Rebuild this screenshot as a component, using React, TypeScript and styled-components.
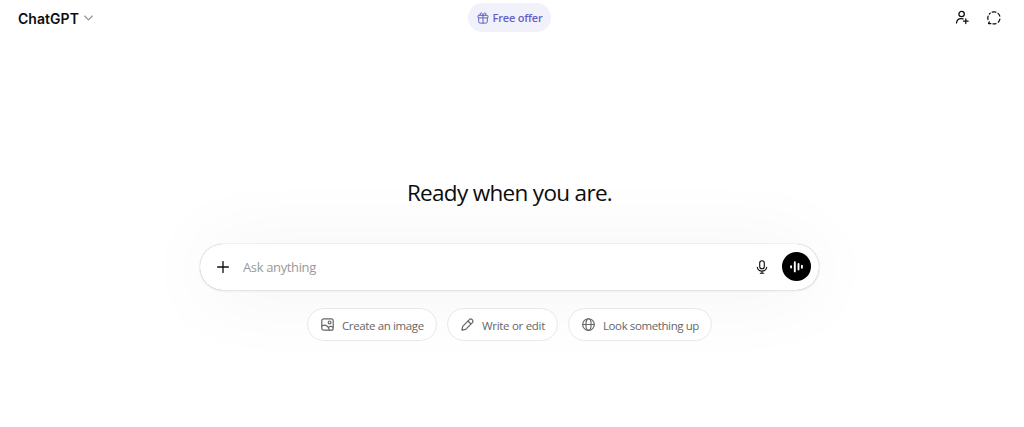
import type { ReactNode } from "react";
import styled, { createGlobalStyle } from "styled-components";

type ChipProps = {
  icon: ReactNode;
  label: string;
  width: number;
  spacing: number;
};

export default function App() {
  return (
    <Page>
      <GlobalStyle />
      <Header>
        <ModelButton>
          ChatGPT
          <ChevronIcon />
        </ModelButton>
        <OfferButton>
          <GiftIcon />
          <OfferText>Free offer</OfferText>
        </OfferButton>
        <HeaderActions>
          <IconButton aria-label="Invite">
            <InviteIcon />
          </IconButton>
          <IconButton aria-label="Temporary chat">
            <TemporaryIcon />
          </IconButton>
        </HeaderActions>
      </Header>
      <Main>
        <Title>Ready when you are.</Title>
        <Composer>
          <IconButton aria-label="Add">
            <PlusIcon />
          </IconButton>
          <Placeholder>Ask anything</Placeholder>
          <IconButton aria-label="Dictate">
            <MicIcon />
          </IconButton>
          <VoiceButton aria-label="Voice mode">
            <VoiceIcon />
          </VoiceButton>
        </Composer>
        <Chips>
          <Chip icon={<ImageIcon />} label="Create an image" width={130} spacing={-0.38} />
          <Chip icon={<PencilIcon />} label="Write or edit" width={111} spacing={-0.3} />
          <Chip icon={<GlobeIcon />} label="Look something up" width={144} spacing={-0.4} />
        </Chips>
      </Main>
    </Page>
  );
}

const Chip = ({ icon, label, width, spacing }: ChipProps) => (
  <ChipButton $width={width}>
    {icon}
    <ChipText $spacing={spacing}>{label}</ChipText>
  </ChipButton>
);

const ChevronIcon = () => (
  <Icon width="9" height="6" viewBox="0 0 9 6" stroke="#929292" strokeWidth="1.15">
    <path d="M.7 1 4.5 4.8 8.3 1" />
  </Icon>
);

const GiftIcon = () => (
  <Icon width="12" height="12" viewBox="0 0 12 12" strokeWidth="1">
    <rect x="1" y="3.3" width="10" height="2.6" rx=".7" />
    <path d="M1.7 5.9v3.8c0 .9.5 1.4 1.4 1.4h5.800c.9 0 1.400-.5 1.400-1.400V5.900M6 3.300v7.800M6 3.200C5.500 1.600 4.900 1 4.100 1c-1.300 0-1.600 1.700-.5 2.200M6 3.200C6.500 1.600 7.100 1 7.900 1c1.300 0 1.600 1.700.5 2.200" />
  </Icon>
);

const InviteIcon = () => (
  <Icon width="14" height="15" viewBox="0 0 14 15" strokeWidth="1.25">
    <circle cx="6.6" cy="4" r="2.7" />
    <path d="M1.5 13c.3-2.9 2.1-4.5 4.600-4.500.8 0 1.400.1 2 .4M10.800 8.900v4.600M8.500 11.200h4.600" />
  </Icon>
);

const TemporaryIcon = () => (
  <Icon width="14" height="14" viewBox="0 0 14 14" strokeWidth="1.25">
    <path d="M5.2 1.1A6.1 6.1 0 0 1 8.9 1.1M11 2.4A6.1 6.1 0 0 1 12.8 5.1M12.9 8.2A6.1 6.1 0 0 1 11.3 11.2M9 12.7A6.1 6.1 0 0 1 5.9 12.8M3.900 12.500H1.500L2.300 10.900M1 8.500A6.100 6.100 0 0 1 1.100 5.200M2.400 3A6.100 6.100 0 0 1 3.200 2.200" />
  </Icon>
);

const PlusIcon = () => (
  <Icon width="12" height="12" viewBox="0 0 12 12" strokeWidth="1.3">
    <path d="M6 .6v10.8M.6 6h10.8" />
  </Icon>
);

const MicIcon = () => (
  <Icon width="12" height="14" viewBox="0 0 12 14" strokeWidth="1.1">
    <rect x="3.7" y=".7" width="4.6" height="8" rx="2.3" />
    <path d="M1.3 7.3C1.800 9.700 3.600 11 6 11s4.200-1.300 4.700-3.700M6 11v2.200M4.300 13.300h3.400" />
  </Icon>
);

const VoiceIcon = () => (
  <Icon width="14" height="12" viewBox="0 0 14 12" strokeWidth="1.9">
    <path d="M1.1 5.1v1.4M4.800 1.200v9.200M8.500 3v5.600M11.900 4.800v2" />
  </Icon>
);

const ImageIcon = () => (
  <Icon width="13" height="13" viewBox="0 0 13 13" strokeWidth="1.2">
    <rect x=".8" y=".8" width="11.4" height="11.4" rx="2" />
    <circle cx="8.6" cy="4.4" r="1.4" />
    <path d="M1 8C4 5.900 7.600 7.800 8.300 12M7.500 9.200c1.400-1.200 2.800-1.200 4.300-.2" />
  </Icon>
);

const PencilIcon = () => (
  <Icon width="13" height="13" viewBox="0 0 13 13" strokeWidth="1.2">
    <path d="M.9 12.100l.8-3.800L8.100 1.800c2-2.100 5.100.8 3.100 3L4.700 11.300zM6.900 3l3.100 3" />
  </Icon>
);

const GlobeIcon = () => (
  <Icon width="13" height="13" viewBox="0 0 13 13" strokeWidth="1.15">
    <circle cx="6.5" cy="6.5" r="5.8" />
    <ellipse cx="6.5" cy="6.5" rx="2.6" ry="5.8" />
    <path d="M.7 6.5h11.6" />
  </Icon>
);

const GlobalStyle = createGlobalStyle`
  * {
    box-sizing: border-box;
  }

  body {
    margin: 0;
    background: #fff;
    color: #0d0d0d;
    font-family: "Open Sans", "Noto Sans", sans-serif;
  }

  button {
    border: 0;
    padding: 0;
    background: none;
    color: inherit;
    font: inherit;
  }
`;

const Icon = styled.svg`
  display: block;
  flex: none;
  fill: none;
  stroke: ${({ stroke }) => stroke ?? "currentColor"};
  stroke-linecap: round;
  stroke-linejoin: round;
`;

const Page = styled.div`
  height: 427px;
  padding-right: 5px;
  overflow: hidden;
`;

const Header = styled.header`
  display: grid;
  grid-template-columns: 1fr auto 1fr;
  align-items: center;
  height: 35px;
  padding: 0 9px 0 18px;
`;

const ModelButton = styled.button`
  display: flex;
  align-items: center;
  justify-self: start;
  gap: 5px;
  padding-top: 1px;
  font-family: Inter, sans-serif;
  font-size: 14px;
  font-weight: 600;
  letter-spacing: 0.05px;
`;

const OfferButton = styled.button`
  display: flex;
  align-items: center;
  justify-content: center;
  gap: 4px;
  width: 83px;
  height: 29px;
  margin-right: 9px;
  border-radius: 15px;
  background: #f1f1fc;
  color: #6660c5;
`;

const OfferText = styled.span`
  font-size: 11px;
  font-weight: 600;
  letter-spacing: -0.2px;
  white-space: nowrap;
`;

const HeaderActions = styled.div`
  display: flex;
  justify-self: end;
`;

const IconButton = styled.button`
  display: flex;
  align-items: center;
  justify-content: center;
  width: 32px;
  height: 32px;
`;

const Main = styled.main`
  display: flex;
  flex-direction: column;
  align-items: center;
  padding-top: 140px;
`;

const Title = styled.h1`
  height: 36px;
  margin: 0;
  font-size: 22.5px;
  font-weight: 400;
  line-height: 36px;
  letter-spacing: -0.68px;
  white-space: nowrap;
`;

const Composer = styled.div`
  display: flex;
  align-items: center;
  width: 619px;
  height: 46px;
  margin-top: 33px;
  padding: 0 8px 1px 7px;
  border-radius: 23px;
  background: #fff;
  box-shadow:
    0 0 1px rgba(0, 0, 0, 0.4),
    0 1px 3px rgba(0, 0, 0, 0.08),
    0 3px 80px rgba(0, 0, 0, 0.06);
`;

const Placeholder = styled.span`
  flex: 1;
  padding-left: 4px;
  color: #999;
  font-size: 13px;
  letter-spacing: -0.36px;
`;

const VoiceButton = styled(IconButton)`
  width: 29px;
  height: 29px;
  margin-left: 4px;
  border-radius: 50%;
  background: #000;
  color: #fff;
`;

const Chips = styled.div`
  display: flex;
  gap: 10px;
  margin-top: 18px;
`;

const ChipButton = styled.button<{ $width: number }>`
  display: flex;
  align-items: center;
  gap: 8px;
  width: ${({ $width }) => $width}px;
  height: 33px;
  padding-left: 13px;
  border: 1px solid #e8e8e8;
  border-radius: 17px;
  background: #fff;
  color: #666;
`;

const ChipText = styled.span<{ $spacing: number }>`
  padding-top: 1px;
  font-size: 11.5px;
  letter-spacing: ${({ $spacing }) => $spacing}px;
  white-space: nowrap;
`;
